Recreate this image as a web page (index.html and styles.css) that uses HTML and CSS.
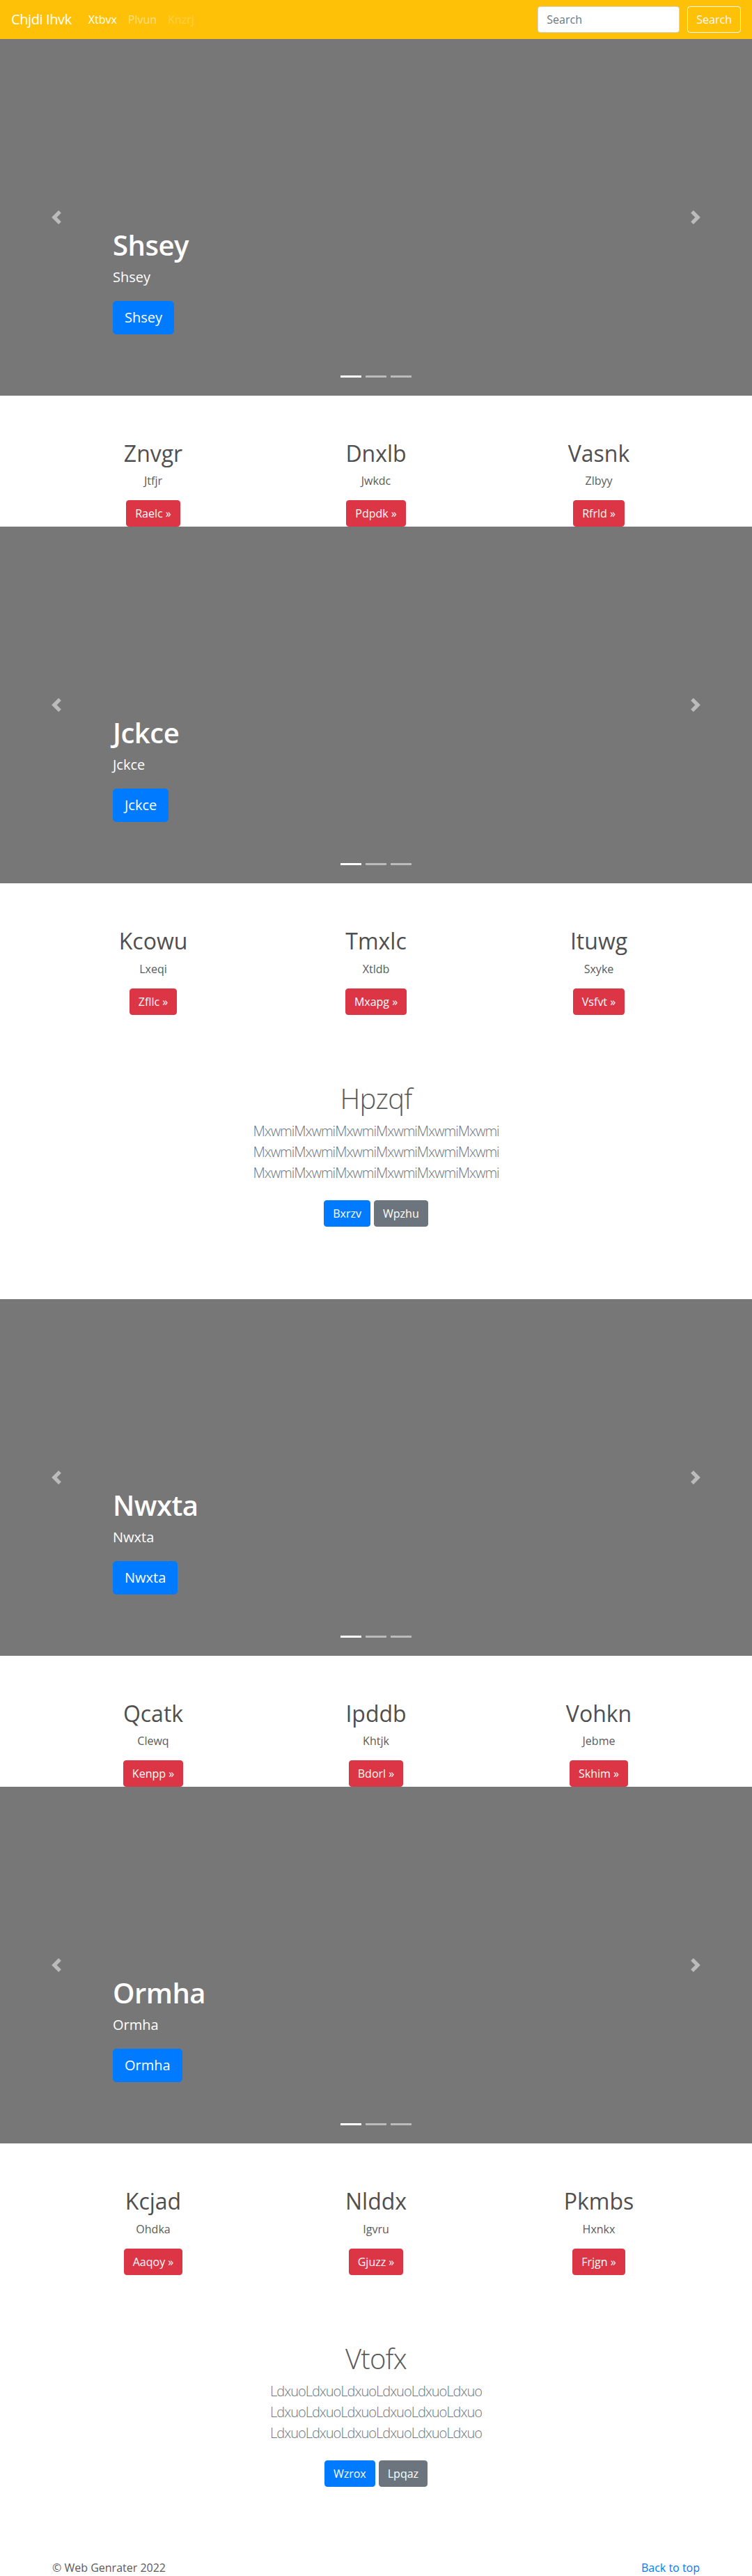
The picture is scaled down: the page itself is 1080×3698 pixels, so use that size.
FILE: index.html
```html
<!DOCTYPE html>
<html lang="en">
<head>
<meta charset="utf-8">
<title>Chjdi Ihvk</title>
<link rel="stylesheet" href="styles.css">
</head>
<body>
<header class="topbar">
  <a class="brand" href="#">Chjdi Ihvk</a>
  <nav class="menu">
    <a class="menu-link is-active" href="#">Xtbvx</a>
    <a class="menu-link" href="#">Plvun</a>
    <a class="menu-link is-disabled" href="#">Knzrj</a>
  </nav>
  <form class="search">
    <input class="search-input" type="text" placeholder="Search">
    <button class="search-btn" type="button">Search</button>
  </form>
</header>

<main>
  <section class="slider">
    <div class="caption">
      <h1 class="caption-title">Shsey</h1>
      <p class="caption-text">Shsey</p>
      <a class="btn btn-lg btn-primary" href="#">Shsey</a>
    </div>
    <a class="ctrl ctrl-prev" href="#"><svg width="20" height="20" viewBox="0 0 8 8"><path fill="#fff" d="M5.25 0l-4 4 4 4 1.5-1.5L4.25 4l2.5-2.5L5.25 0z"/></svg></a>
    <a class="ctrl ctrl-next" href="#"><svg width="20" height="20" viewBox="0 0 8 8"><path fill="#fff" d="M2.75 0l-1.5 1.5L3.75 4l-2.5 2.5L2.75 8l4-4-4-4z"/></svg></a>
    <ol class="dots"><li class="dot is-on"></li><li class="dot"></li><li class="dot"></li></ol>
  </section>

  <section class="cols">
    <div class="col"><h2 class="col-title">Znvgr</h2><p class="col-text">Jtfjr</p><div><a class="btn btn-danger" href="#">Raelc &raquo;</a></div></div>
    <div class="col"><h2 class="col-title">Dnxlb</h2><p class="col-text">Jwkdc</p><div><a class="btn btn-danger" href="#">Pdpdk &raquo;</a></div></div>
    <div class="col"><h2 class="col-title">Vasnk</h2><p class="col-text">Zlbyy</p><div><a class="btn btn-danger" href="#">Rfrld &raquo;</a></div></div>
  </section>

  <section class="slider">
    <div class="caption">
      <h1 class="caption-title">Jckce</h1>
      <p class="caption-text">Jckce</p>
      <a class="btn btn-lg btn-primary" href="#">Jckce</a>
    </div>
    <a class="ctrl ctrl-prev" href="#"><svg width="20" height="20" viewBox="0 0 8 8"><path fill="#fff" d="M5.25 0l-4 4 4 4 1.5-1.5L4.25 4l2.5-2.5L5.25 0z"/></svg></a>
    <a class="ctrl ctrl-next" href="#"><svg width="20" height="20" viewBox="0 0 8 8"><path fill="#fff" d="M2.75 0l-1.5 1.5L3.75 4l-2.5 2.5L2.75 8l4-4-4-4z"/></svg></a>
    <ol class="dots"><li class="dot is-on"></li><li class="dot"></li><li class="dot"></li></ol>
  </section>

  <section class="cols">
    <div class="col"><h2 class="col-title">Kcowu</h2><p class="col-text">Lxeqi</p><div><a class="btn btn-danger" href="#">Zfllc &raquo;</a></div></div>
    <div class="col"><h2 class="col-title">Tmxlc</h2><p class="col-text">Xtldb</p><div><a class="btn btn-danger" href="#">Mxapg &raquo;</a></div></div>
    <div class="col"><h2 class="col-title">Ituwg</h2><p class="col-text">Sxyke</p><div><a class="btn btn-danger" href="#">Vsfvt &raquo;</a></div></div>
  </section>

  <section class="feature">
    <h1 class="feature-title">Hpzqf</h1>
    <p class="lead">MxwmiMxwmiMxwmiMxwmiMxwmiMxwmi<br>MxwmiMxwmiMxwmiMxwmiMxwmiMxwmi<br>MxwmiMxwmiMxwmiMxwmiMxwmiMxwmi</p>
    <div class="feature-actions">
      <a class="btn btn-primary" href="#">Bxrzv</a>
      <a class="btn btn-secondary" href="#">Wpzhu</a>
    </div>
  </section>

  <section class="slider">
    <div class="caption">
      <h1 class="caption-title">Nwxta</h1>
      <p class="caption-text">Nwxta</p>
      <a class="btn btn-lg btn-primary" href="#">Nwxta</a>
    </div>
    <a class="ctrl ctrl-prev" href="#"><svg width="20" height="20" viewBox="0 0 8 8"><path fill="#fff" d="M5.25 0l-4 4 4 4 1.5-1.5L4.25 4l2.5-2.5L5.25 0z"/></svg></a>
    <a class="ctrl ctrl-next" href="#"><svg width="20" height="20" viewBox="0 0 8 8"><path fill="#fff" d="M2.75 0l-1.5 1.5L3.75 4l-2.5 2.5L2.75 8l4-4-4-4z"/></svg></a>
    <ol class="dots"><li class="dot is-on"></li><li class="dot"></li><li class="dot"></li></ol>
  </section>

  <section class="cols">
    <div class="col"><h2 class="col-title">Qcatk</h2><p class="col-text">Clewq</p><div><a class="btn btn-danger" href="#">Kenpp &raquo;</a></div></div>
    <div class="col"><h2 class="col-title">Ipddb</h2><p class="col-text">Khtjk</p><div><a class="btn btn-danger" href="#">Bdorl &raquo;</a></div></div>
    <div class="col"><h2 class="col-title">Vohkn</h2><p class="col-text">Jebme</p><div><a class="btn btn-danger" href="#">Skhim &raquo;</a></div></div>
  </section>

  <section class="slider">
    <div class="caption">
      <h1 class="caption-title">Ormha</h1>
      <p class="caption-text">Ormha</p>
      <a class="btn btn-lg btn-primary" href="#">Ormha</a>
    </div>
    <a class="ctrl ctrl-prev" href="#"><svg width="20" height="20" viewBox="0 0 8 8"><path fill="#fff" d="M5.25 0l-4 4 4 4 1.5-1.5L4.25 4l2.5-2.5L5.25 0z"/></svg></a>
    <a class="ctrl ctrl-next" href="#"><svg width="20" height="20" viewBox="0 0 8 8"><path fill="#fff" d="M2.75 0l-1.5 1.5L3.75 4l-2.5 2.5L2.75 8l4-4-4-4z"/></svg></a>
    <ol class="dots"><li class="dot is-on"></li><li class="dot"></li><li class="dot"></li></ol>
  </section>

  <section class="cols">
    <div class="col"><h2 class="col-title">Kcjad</h2><p class="col-text">Ohdka</p><div><a class="btn btn-danger" href="#">Aaqoy &raquo;</a></div></div>
    <div class="col"><h2 class="col-title">Nlddx</h2><p class="col-text">Igvru</p><div><a class="btn btn-danger" href="#">Gjuzz &raquo;</a></div></div>
    <div class="col"><h2 class="col-title">Pkmbs</h2><p class="col-text">Hxnkx</p><div><a class="btn btn-danger" href="#">Frjgn &raquo;</a></div></div>
  </section>

  <section class="feature">
    <h1 class="feature-title">Vtofx</h1>
    <p class="lead">LdxuoLdxuoLdxuoLdxuoLdxuoLdxuo<br>LdxuoLdxuoLdxuoLdxuoLdxuoLdxuo<br>LdxuoLdxuoLdxuoLdxuoLdxuoLdxuo</p>
    <div class="feature-actions">
      <a class="btn btn-primary" href="#">Wzrox</a>
      <a class="btn btn-secondary" href="#">Lpqaz</a>
    </div>
  </section>
</main>

<footer class="footer">
  <p class="footer-text">&copy; Web Genrater 2022</p>
  <p class="footer-text"><a class="footer-link" href="#">Back to top</a></p>
</footer>
</body>
</html>
```

FILE: styles.css
```css
* { box-sizing: border-box; }

body {
  margin: 0;
  font-family: "Open Sans", "Noto Sans", sans-serif;
  font-size: 16px;
  line-height: 1.5;
  color: #5a5a5a;
  background: #fff;
}

a { text-decoration: none; }

/* ---------- top bar ---------- */
.topbar {
  display: flex;
  align-items: center;
  height: 56px;
  padding: 0 16px;
  background: #ffc107;
}
.brand {
  font-size: 20px;
  line-height: 30px;
  letter-spacing: -0.4px;
  color: #fff;
  margin-right: 16px;
}
.menu { display: flex; }
.menu-link {
  padding: 8px;
  line-height: 24px;
  color: rgba(255, 255, 255, .5);
}
.menu-link.is-active { color: #fff; }
.menu-link.is-disabled { color: rgba(255, 255, 255, .25); }

.search {
  margin-left: auto;
  display: flex;
  gap: 11px;
}
.search-input {
  width: 204px;
  height: 38px;
  padding: 6px 12px;
  font: inherit;
  color: #495057;
  border: 1px solid #ced4da;
  border-radius: 4px;
  background: #fff;
}
.search-input::placeholder { color: #6c757d; }
.search-btn {
  height: 38px;
  padding: 6px 12px;
  font: inherit;
  color: #f8f9fa;
  background: transparent;
  border: 1px solid #f8f9fa;
  border-radius: 4px;
}

/* ---------- buttons ---------- */
.btn {
  display: inline-block;
  padding: 6px 12px;
  font-size: 16px;
  line-height: 24px;
  color: #fff;
  border: 1px solid transparent;
  border-radius: 4px;
}
.btn-lg {
  padding: 8px 16px;
  font-size: 20px;
  line-height: 30px;
  border-radius: 5px;
}
.btn-primary { background: #007bff; border-color: #007bff; }
.btn-secondary { background: #6c757d; border-color: #6c757d; }
.btn-danger { background: #dc3545; border-color: #dc3545; }

/* ---------- slider ---------- */
.slider {
  position: relative;
  height: 512px;
  background: #777;
  color: #fff;
  display: flex;
  flex-direction: column;
  justify-content: flex-end;
  padding: 0 15% 88px;
}
.caption {
  display: flex;
  flex-direction: column;
  align-items: flex-start;
}
.caption-title {
  margin: 0 0 8px;
  font-size: 40px;
  line-height: 48px;
  font-weight: 600;
  letter-spacing: -0.5px;
}
.caption-text {
  margin: 0 0 20px;
  font-size: 20px;
  line-height: 28px;
}
.ctrl {
  position: absolute;
  top: 0;
  bottom: 0;
  width: 15%;
  display: flex;
  align-items: center;
  justify-content: center;
  opacity: .5;
}
.ctrl-prev { left: 0; }
.ctrl-next { right: 0; }
.ctrl svg { display: block; }
.dots {
  position: absolute;
  left: 0;
  right: 0;
  bottom: 0;
  margin: 0 15% 16px;
  padding: 0;
  list-style: none;
  display: flex;
  justify-content: center;
}
.dot {
  width: 30px;
  height: 23px;
  margin: 0 3px;
  border-top: 10px solid transparent;
  border-bottom: 10px solid transparent;
  background: #fff;
  background-clip: padding-box;
  opacity: .5;
}
.dot.is-on { opacity: 1; }

/* ---------- columns ---------- */
.cols {
  width: 960px;
  margin: 0 auto;
  padding-top: 64px;
  display: grid;
  grid-template-columns: repeat(3, 1fr);
  text-align: center;
}
.col { padding: 0 15px; }
.col-title {
  margin: 0 0 8px;
  font-size: 32px;
  line-height: 38.4px;
  font-weight: 400;
  color: #4f4f4f;
}
.col-text {
  margin: 0 12px 16px;
}

/* ---------- feature ---------- */
.feature {
  text-align: center;
  padding: 96.6px 0 103.5px;
}
.feature-title {
  margin: 0 0 8px;
  font-size: 40px;
  line-height: 48px;
  font-weight: 300;
  letter-spacing: -0.8px;
}
.lead {
  margin: 0 0 24px;
  font-size: 20px;
  line-height: 30px;
  font-weight: 300;
  letter-spacing: -1px;
  color: #6c757d;
}
.feature-actions {
  display: flex;
  justify-content: center;
  gap: 5px;
}

/* ---------- footer ---------- */
.footer {
  width: 930px;
  margin: 0 auto;
  display: flex;
  justify-content: space-between;
}
.footer-text { margin: 0 0 16px; }
.footer-link { color: #007bff; }
```
